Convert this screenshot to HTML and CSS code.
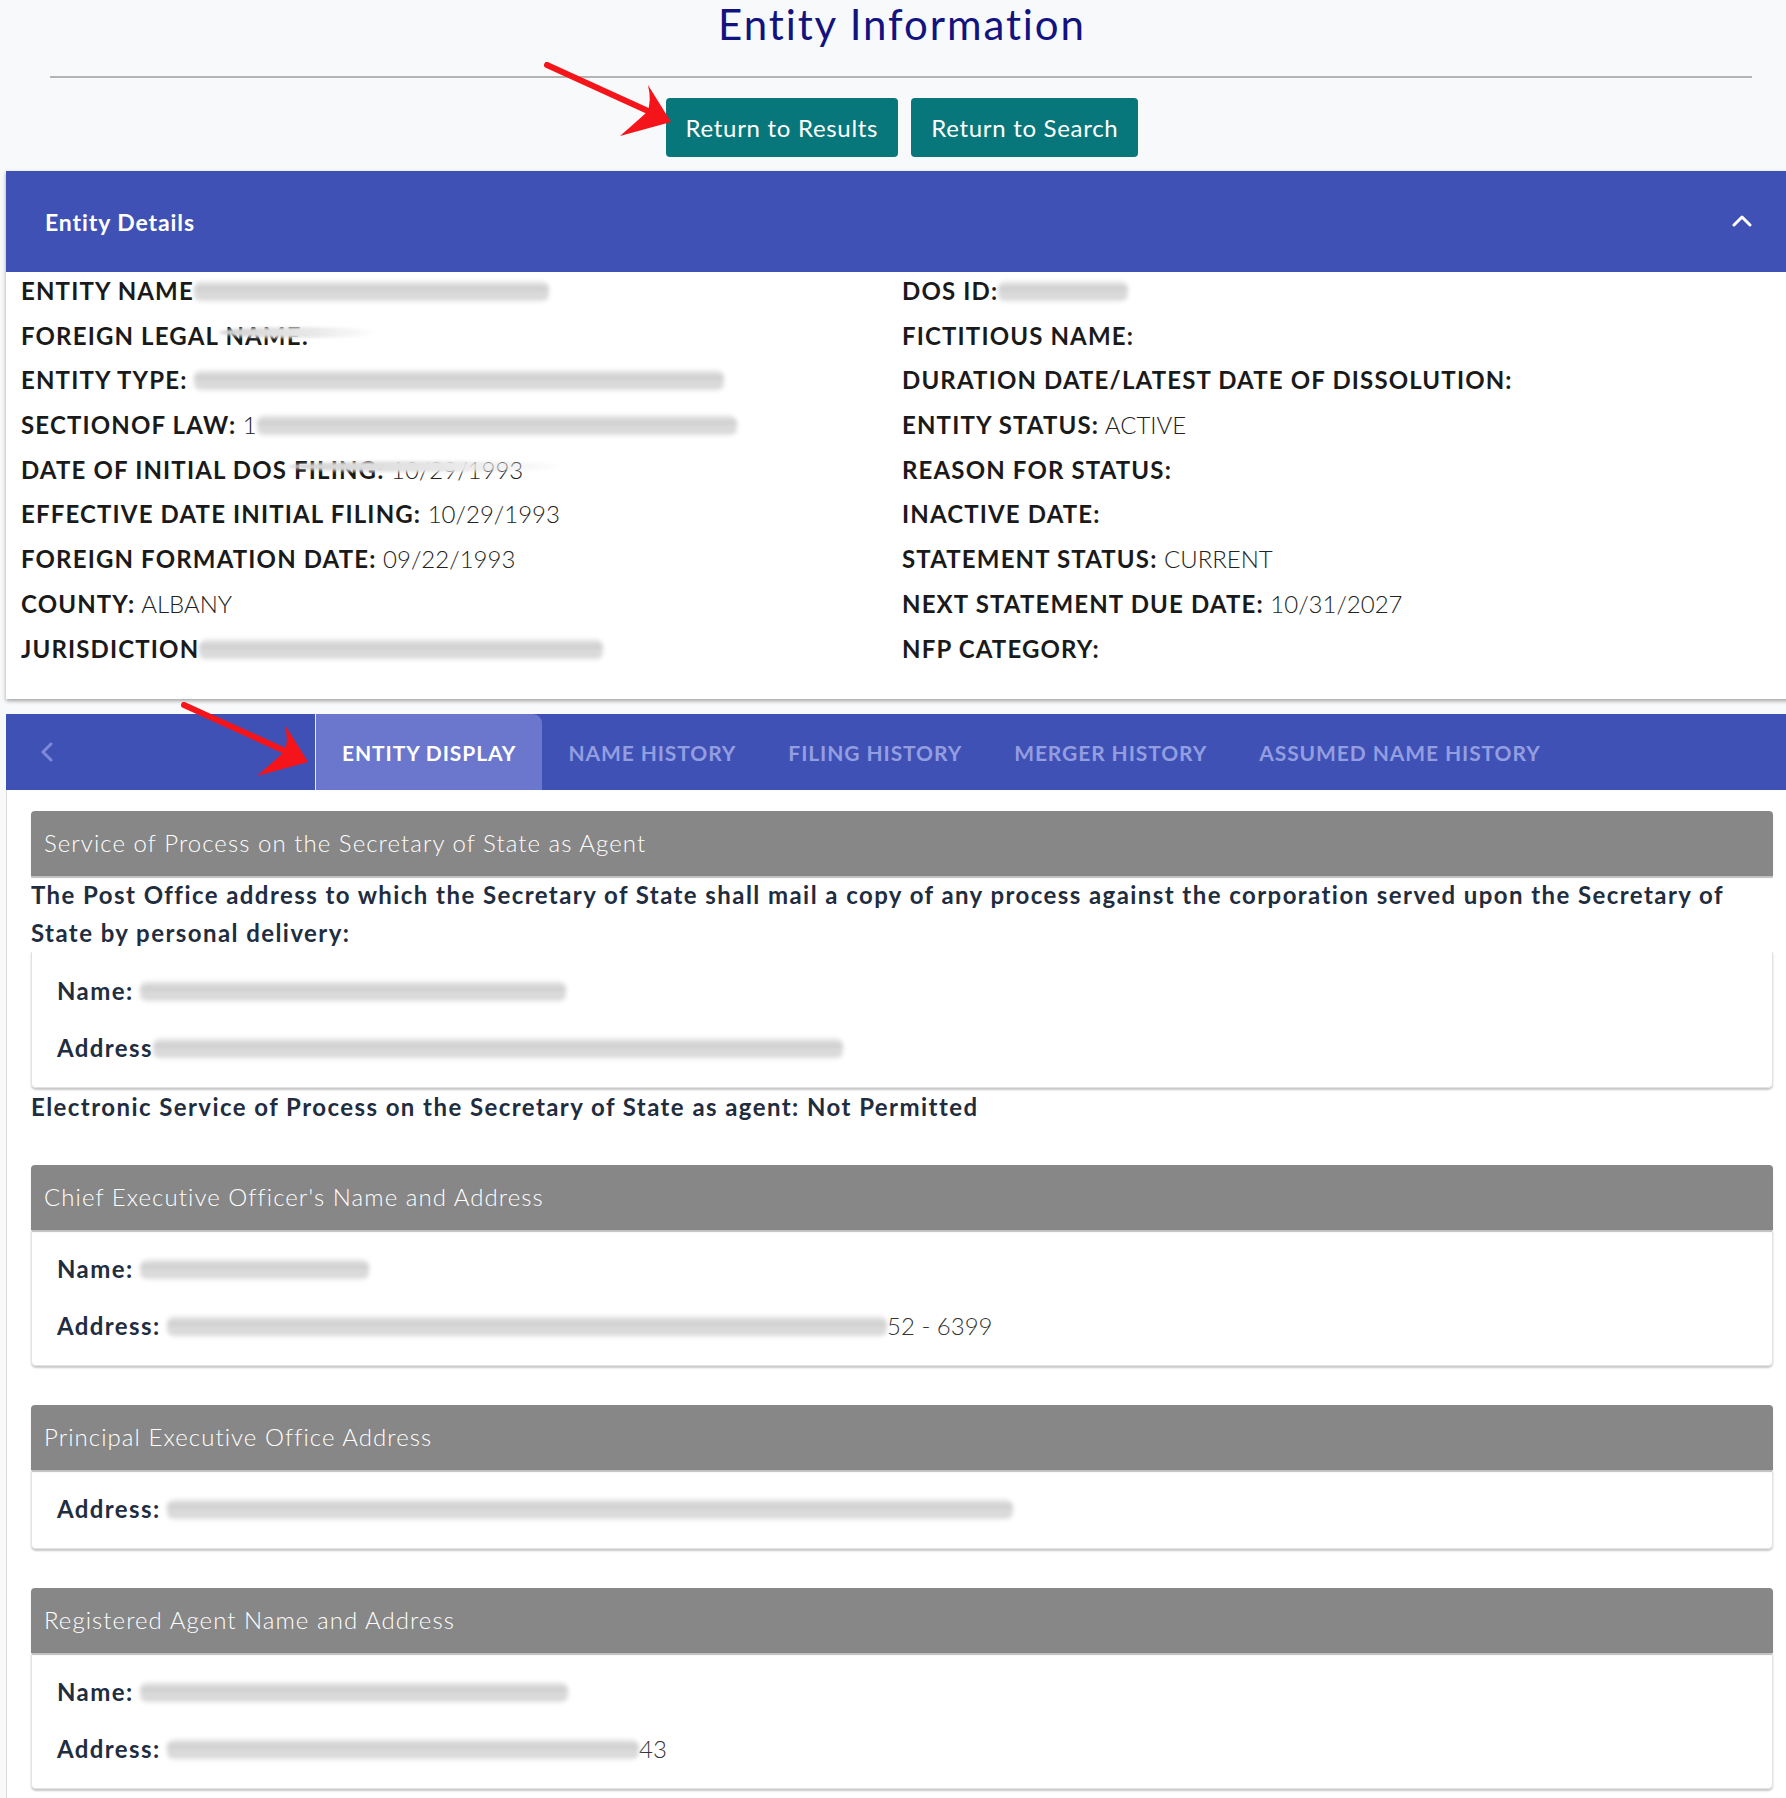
FILE: index.html
```html
<!DOCTYPE html>
<html>

<head>
    <title>Entity Information</title>
    <link rel="stylesheet" href="styles.css">
</head>

<body>
    <div class="page">
        <h1 class="title">Entity Information</h1>
        <hr class="rule">

        <div class="actions">
            <button class="btn">Return to Results</button>
            <button class="btn">Return to Search</button>
        </div>

        <section class="details-card">
            <div class="details-head">
                <span>Entity Details</span>
                <svg class="chevron-up" width="20" height="12" viewBox="0 0 20 12">
                    <path d="M2 10 L10 2 L18 10" fill="none" stroke="#fff" stroke-width="3" stroke-linecap="round" stroke-linejoin="round" />
                </svg>
            </div>
            <div class="details-grid">
                <div class="details-col">
                    <p class="row"><b>ENTITY NAME</b><span class="redact" style="width:355px"></span></p>
                    <p class="row"><b>FOREIGN LEGAL <span class="smudge">NAME:<i class="streak" style="width:160px"></i></span></b></p>
                    <p class="row"><b>ENTITY TYPE:</b> <span class="redact" style="width:530px"></span></p>
                    <p class="row"><b>SECTIONOF LAW:</b> 1<span class="redact" style="width:480px"></span></p>
                    <p class="row"><b>DATE OF INITIAL DOS <span class="smudge">FILING:<i class="streak" style="width:280px"></i></span></b> 10/29/1993</p>
                    <p class="row"><b>EFFECTIVE DATE INITIAL FILING:</b> 10/29/1993</p>
                    <p class="row"><b>FOREIGN FORMATION DATE:</b> 09/22/1993</p>
                    <p class="row"><b>COUNTY:</b> ALBANY</p>
                    <p class="row"><b>JURISDICTION</b><span class="redact" style="width:404px"></span></p>
                </div>
                <div class="details-col">
                    <p class="row"><b>DOS ID:</b><span class="redact" style="width:130px"></span></p>
                    <p class="row"><b>FICTITIOUS NAME:</b></p>
                    <p class="row"><b>DURATION DATE/LATEST DATE OF DISSOLUTION:</b></p>
                    <p class="row"><b>ENTITY STATUS:</b> ACTIVE</p>
                    <p class="row"><b>REASON FOR STATUS:</b></p>
                    <p class="row"><b>INACTIVE DATE:</b></p>
                    <p class="row"><b>STATEMENT STATUS:</b> CURRENT</p>
                    <p class="row"><b>NEXT STATEMENT DUE DATE:</b> 10/31/2027</p>
                    <p class="row"><b>NFP CATEGORY:</b></p>
                </div>
            </div>
        </section>

        <nav class="tabs">
            <div class="tabs-prev">
                <svg width="14" height="20" viewBox="0 0 14 20">
                    <path d="M11 2 L3 10 L11 18" fill="none" stroke="#7f8ad6" stroke-width="3" stroke-linecap="round" stroke-linejoin="round" />
                </svg>
            </div>
            <a class="tab active">ENTITY DISPLAY</a>
            <a class="tab">NAME HISTORY</a>
            <a class="tab">FILING HISTORY</a>
            <a class="tab">MERGER HISTORY</a>
            <a class="tab">ASSUMED NAME HISTORY</a>
        </nav>

        <div class="tab-panel">
            <div class="block">
                <div class="block-head">Service of Process on the Secretary of State as Agent</div>
                <p class="note">The Post Office address to which the Secretary of State shall mail a copy of any process against the corporation served upon the Secretary of State by personal delivery:</p>
                <div class="block-body">
                    <p class="field"><b>Name:</b> <span class="redact" style="width:426px"></span></p>
                    <p class="field"><b>Address</b><span class="redact" style="width:690px"></span></p>
                </div>
                <p class="note">Electronic Service of Process on the Secretary of State as agent: Not Permitted</p>
            </div>

            <div class="block">
                <div class="block-head">Chief Executive Officer's Name and Address</div>
                <div class="block-body">
                    <p class="field"><b>Name:</b> <span class="redact" style="width:229px"></span></p>
                    <p class="field"><b>Address:</b> <span class="redact" style="width:720px"></span>52 - 6399</p>
                </div>
            </div>

            <div class="block">
                <div class="block-head">Principal Executive Office Address</div>
                <div class="block-body">
                    <p class="field"><b>Address:</b> <span class="redact" style="width:846px"></span></p>
                </div>
            </div>

            <div class="block">
                <div class="block-head">Registered Agent Name and Address</div>
                <div class="block-body">
                    <p class="field"><b>Name:</b> <span class="redact" style="width:428px"></span></p>
                    <p class="field"><b>Address:</b> <span class="redact" style="width:472px"></span>43</p>
                </div>
            </div>
        </div>

        <!-- annotation arrows drawn over the screenshot -->
        <svg class="arrow arrow-results" width="130" height="80" viewBox="0 0 130 80">
            <path d="M3 3 L104 49" stroke="#f5141a" stroke-width="6" stroke-linecap="round" />
            <path d="M127 60 L104 23 Q108 40 103 50 Q92 60 76 74 Z" fill="#f5141a" />
        </svg>
        <svg class="arrow arrow-display" width="130" height="80" viewBox="0 0 130 80">
            <path d="M3 3 L104 49" stroke="#f5141a" stroke-width="6" stroke-linecap="round" />
            <path d="M127 60 L104 23 Q108 40 103 50 Q92 60 76 74 Z" fill="#f5141a" />
        </svg>
    </div>
</body>

</html>
```

FILE: styles.css
```css
body {
    margin: 0;
    font-family: Lato, "Liberation Sans", sans-serif;
    background-color: #f8f9fa;
    overflow-x: hidden;
}

.page {
    position: relative;
    margin-left: 6px;
    width: 1792px;
}

.title {
    margin: 0;
    font-size: 42px;
    line-height: 48px;
    font-weight: 400;
    letter-spacing: 1.9px;
    color: #13137f;
    text-align: center;
}

.rule {
    margin: 28px 46px 0 44px;
    border: none;
    border-top: 2px solid #b4b4b4;
}

.actions {
    display: flex;
    justify-content: center;
    gap: 13px;
    margin-top: 20px;
}

.btn {
    font-family: inherit;
    font-size: 24px;
    font-weight: 400;
    letter-spacing: 0.7px;
    color: #fff;
    background-color: #08777b;
    border: none;
    border-radius: 4px;
    height: 59px;
    padding: 0 20px;
}

/* entity details card */
.details-card {
    margin-top: 14px;
    background-color: #fff;
    box-shadow: 0 2px 4px rgba(0, 0, 0, 0.35);
}

.details-head {
    display: flex;
    align-items: center;
    justify-content: space-between;
    height: 101px;
    padding: 0 46px 0 39px;
    background-color: #3f51b5;
    color: #fff;
    font-size: 23px;
    font-weight: 700;
    letter-spacing: 0.9px;
}

.chevron-up {
    margin-top: -2px;
}

.details-grid {
    display: grid;
    grid-template-columns: 1fr 1fr;
    padding: 0 15px 25px 15px;
}

.row {
    margin: 0 0 6.7px 0;
    font-size: 24px;
    line-height: 38px;
    font-weight: 300;
    color: #222;
    white-space: nowrap;
}

.row b {
    font-weight: 700;
    letter-spacing: 1.15px;
    color: #1a1a1a;
}

.redact {
    display: inline-block;
    height: 21px;
    vertical-align: -2px;
    border-radius: 8px;
    background: linear-gradient(180deg, #ececec 0%, #cbcbcb 40%, #e2e2e2 60%, #d2d2d2 75%, #f0f0f0 100%);
    filter: blur(2.2px);
}

.smudge {
    position: relative;
}

.streak {
    position: absolute;
    left: -6px;
    top: 6px;
    height: 11px;
    border-radius: 50%;
    background: linear-gradient(90deg, #d2d2d2 0%, #e9e9e9 60%, rgba(255, 255, 255, 0) 100%);
    filter: blur(1.5px);
}

/* tab bar */
.tabs {
    display: flex;
    align-items: stretch;
    height: 76px;
    margin-top: 15px;
    background-color: #3f51b5;
}

.tabs-prev {
    display: flex;
    align-items: center;
    width: 309px;
    padding-left: 34px;
    box-sizing: border-box;
}

.tab {
    display: flex;
    align-items: center;
    padding: 1px 26px 0 26px;
    font-size: 21px;
    font-weight: 700;
    letter-spacing: 0.9px;
    color: #939ee0;
}

.tab.active {
    color: #fff;
    background-color: #6a77cc;
    border-top-right-radius: 9px;
    border-left: 1px solid #e8eaf6;
}

/* tab content */
.tab-panel {
    background-color: #fff;
    border-left: 1px solid #dcdcdc;
    padding: 21px 25px 10px 24px;
}

.block {
    margin-bottom: 39px;
}

.block-head {
    height: 65px;
    line-height: 63px;
    padding-left: 13px;
    background-color: #878787;
    color: #fff;
    font-size: 24px;
    font-weight: 300;
    letter-spacing: 1.05px;
    border-radius: 4px 4px 0 0;
    box-shadow: 0 2px 1px rgba(0, 0, 0, 0.25);
}

.note {
    margin: 0;
    font-size: 24px;
    line-height: 38px;
    font-weight: 700;
    letter-spacing: 1.43px;
    color: #1f2d3f;
}

.block-body {
    padding: 20px 25px 20px 25px;
    border: 1px solid #e2e2e2;
    border-top: none;
    border-radius: 0 0 5px 5px;
    box-shadow: 0 2px 2px rgba(0, 0, 0, 0.22);
}

.field {
    margin: 0 0 19px 0;
    font-size: 24px;
    line-height: 38px;
    font-weight: 300;
    color: #333;
}

.field:last-child {
    margin-bottom: 0;
}

.field b {
    font-weight: 700;
    letter-spacing: 1.4px;
    color: #1f2d3f;
}

/* red annotation arrows */
.arrow {
    position: absolute;
}

.arrow-results {
    left: 538px;
    top: 62px;
}

.arrow-display {
    left: 175px;
    top: 702px;
}
```
